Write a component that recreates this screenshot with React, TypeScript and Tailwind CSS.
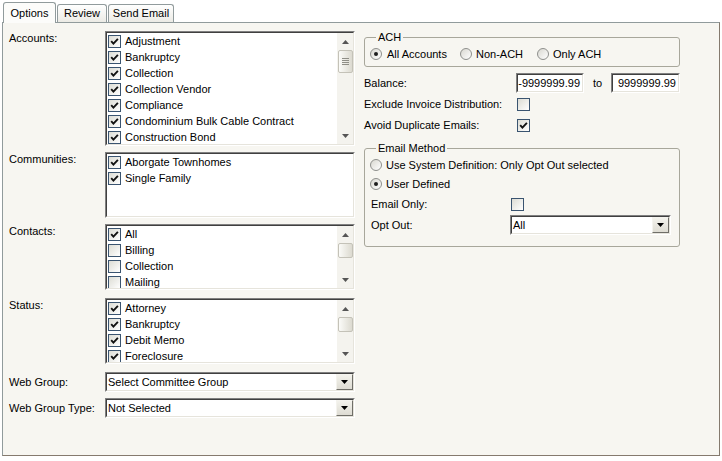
const accounts = [
  "Adjustment",
  "Bankruptcy",
  "Collection",
  "Collection Vendor",
  "Compliance",
  "Condominium Bulk Cable Contract",
  "Construction Bond",
];
const communities = ["Aborgate Townhomes", "Single Family"];
const contacts = [
  { label: "All", checked: true },
  { label: "Billing", checked: false },
  { label: "Collection", checked: false },
  { label: "Mailing", checked: false },
];
const statuses = ["Attorney", "Bankruptcy", "Debit Memo", "Foreclosure"];

function CheckBox({ checked }: { checked: boolean }) {
  return (
    <span className="w-[13px] h-[13px] shrink-0 border border-[#3a5470] bg-linear-to-br from-[#dcdcd4] to-white flex items-center justify-center">
      {checked && (
        <svg width="9" height="9" viewBox="0 0 9 9">
          <path d="M1.2 4.2 L3.4 6.6 L7.9 1.8" fill="none" stroke="#111" strokeWidth="1.9" />
        </svg>
      )}
    </span>
  );
}

function Radio({ checked }: { checked?: boolean }) {
  return (
    <span className="w-[12px] h-[12px] shrink-0 rounded-full border border-[#8e8f8c] bg-linear-to-br from-[#d9d8d1] to-white flex items-center justify-center">
      {checked && <span className="w-[4px] h-[4px] rounded-full bg-[#1e1e1e]" />}
    </span>
  );
}

// sunken 3d frame used by list boxes, text boxes and combos
function Sunken({ className, children }: { className: string; children: React.ReactNode }) {
  return (
    <div className={`border border-t-[#808080] border-l-[#808080] border-r-white border-b-white ${className}`}>
      <div className="h-full flex border border-t-[#404040] border-l-[#404040] border-r-[#e6e4dc] border-b-[#e6e4dc] bg-white">
        {children}
      </div>
    </div>
  );
}

function Tri({ up, color, w, h }: { up?: boolean; color: string; w: number; h: number }) {
  return (
    <svg width={w} height={h} viewBox={`0 0 ${w} ${h}`}>
      <path d={up ? `M0 ${h} L${w} ${h} L${w / 2} 0 Z` : `M0 0 L${w} 0 L${w / 2} ${h} Z`} fill={color} />
    </svg>
  );
}

function ScrollBar({ thumb, grip }: { thumb: string; grip?: boolean }) {
  return (
    <div className="w-[16px] shrink-0 bg-[#f4f3ee] flex flex-col items-center">
      <div className="h-[17px] w-full flex items-center justify-center shrink-0">
        <Tri up color="#555" w={7} h={4} />
      </div>
      <div className={`w-[15px] shrink-0 rounded-[2px] border border-[#c4c2b8] bg-linear-to-r from-[#fbfbf8] to-[#dcdad0] flex flex-col items-center justify-center gap-[1px] ${thumb}`}>
        {grip && (
          <>
            <span className="w-[7px] h-[1px] bg-[#8f8e86]" />
            <span className="w-[7px] h-[1px] bg-[#8f8e86]" />
            <span className="w-[7px] h-[1px] bg-[#8f8e86]" />
            <span className="w-[7px] h-[1px] bg-[#8f8e86]" />
          </>
        )}
      </div>
      <div className="flex-1" />
      <div className="h-[17px] w-full flex items-center justify-center shrink-0">
        <Tri color="#555" w={7} h={4} />
      </div>
    </div>
  );
}

function Item({ label, checked }: { label: string; checked: boolean }) {
  return (
    <div className="h-[16px] flex items-center gap-[4px] pl-[1px] whitespace-nowrap">
      <CheckBox checked={checked} />
      <span>{label}</span>
    </div>
  );
}

function Combo({ value, className }: { value: string; className: string }) {
  return (
    <Sunken className={className}>
      <div className="flex-1 flex items-center pl-[1px]">{value}</div>
      <div className="w-[17px] h-full shrink-0 border border-t-[#f4f3ee] border-l-[#f4f3ee] border-r-[#6f6e68] border-b-[#6f6e68] bg-linear-to-b from-[#f3f2ec] to-[#dedcd3] flex items-center justify-center">
        <Tri color="#000" w={7} h={4} />
      </div>
    </Sunken>
  );
}

function Tab({ label, active, w }: { label: string; active?: boolean; w: string }) {
  return active ? (
    <div className={`h-[21px] rounded-t-[3px] border border-b-0 border-[#919b9c] bg-[#fcfcfa] flex items-center justify-center relative z-10 ${w}`}>
      {label}
    </div>
  ) : (
    <div className={`h-[18px] mb-[1px] rounded-t-[3px] border border-b-0 border-[#919b9c] bg-linear-to-b from-white to-[#ecebe5] flex items-center justify-center ${w}`}>
      {label}
    </div>
  );
}

function Row({ label, children, top }: { label: string; children: React.ReactNode; top?: boolean }) {
  return (
    <div className={`flex ${top ? "items-start" : "items-center"}`}>
      <div className={`w-[96px] shrink-0 ${top ? "mt-[1px]" : ""}`}>{label}</div>
      {children}
    </div>
  );
}

export default function App() {
  return (
    <div className="w-[722px] h-[461px] bg-white pt-[2px] pl-[2px] text-[11px] leading-[13px] text-black font-['Liberation_Sans',Arial,sans-serif]">
      {/* tab strip */}
      <div className="h-[21px] -mb-[1px] pl-[1px] flex items-end gap-[1px]">
        <Tab label="Options" active w="w-[53px]" />
        <Tab label="Review" w="w-[50px]" />
        <Tab label="Send Email" w="w-[66px]" />
      </div>

      {/* tab page */}
      <div className="w-[718px] h-[434px] border border-[#919b9c] border-r-[#857a6e] border-b-[#857a6e] bg-[#f7f6f1] flex pt-[8px] pl-[6px]">
        {/* left column */}
        <div className="w-[346px] flex flex-col">
          <Row label="Accounts:" top>
            <Sunken className="w-[250px] h-[115px]">
              <div className="flex-1 overflow-hidden">
                {accounts.map((a) => (
                  <Item key={a} label={a} checked />
                ))}
              </div>
              <ScrollBar thumb="h-[23px]" grip />
            </Sunken>
          </Row>
          <div className="mt-[6px]">
            <Row label="Communities:" top>
              <Sunken className="w-[250px] h-[66px]">
                <div className="flex-1">
                  {communities.map((c) => (
                    <Item key={c} label={c} checked />
                  ))}
                </div>
              </Sunken>
            </Row>
          </div>
          <div className="mt-[6px]">
            <Row label="Contacts:" top>
              <Sunken className="w-[250px] h-[66px]">
                <div className="flex-1 overflow-hidden">
                  {contacts.map((c) => (
                    <Item key={c.label} label={c.label} checked={c.checked} />
                  ))}
                </div>
                <ScrollBar thumb="h-[15px]" />
              </Sunken>
            </Row>
          </div>
          <div className="mt-[8px]">
            <Row label="Status:" top>
              <Sunken className="w-[250px] h-[66px]">
                <div className="flex-1 overflow-hidden">
                  {statuses.map((s) => (
                    <Item key={s} label={s} checked />
                  ))}
                </div>
                <ScrollBar thumb="h-[15px]" />
              </Sunken>
            </Row>
          </div>
          <div className="mt-[8px]">
            <Row label="Web Group:">
              <Combo value="Select Committee Group" className="w-[250px] h-[20px]" />
            </Row>
          </div>
          <div className="mt-[6px]">
            <Row label="Web Group Type:">
              <Combo value="Not Selected" className="w-[250px] h-[20px]" />
            </Row>
          </div>
        </div>

        {/* right column */}
        <div className="ml-[9px] w-[317px] flex flex-col">
          <fieldset className="w-[316px] border border-[#a8a79b] rounded-[3px] px-[5px] pb-[4px]">
            <legend className="ml-[6px] px-[2px]">ACH</legend>
            <div className="mt-[2px] h-[16px] flex items-center">
              <div className="w-[90px] flex items-center gap-[5px]">
                <Radio checked />
                <span>All Accounts</span>
              </div>
              <div className="w-[77px] flex items-center gap-[4px]">
                <Radio />
                <span>Non-ACH</span>
              </div>
              <div className="flex items-center gap-[4px]">
                <Radio />
                <span>Only ACH</span>
              </div>
            </div>
          </fieldset>

          <div className="mt-[6px] h-[20px] flex items-center">
            <div className="w-[152px]">Balance:</div>
            <Sunken className="w-[68px] h-[20px]">
              <div className="flex-1 flex items-center justify-end pr-[2px]">-9999999.99</div>
            </Sunken>
            <div className="w-[27px] pl-[9px]">to</div>
            <Sunken className="w-[69px] h-[20px]">
              <div className="flex-1 flex items-center justify-end pr-[2px]">9999999.99</div>
            </Sunken>
          </div>

          <div className="mt-[3px] h-[16px] flex items-center">
            <div className="w-[153px]">Exclude Invoice Distribution:</div>
            <CheckBox checked={false} />
          </div>
          <div className="mt-[5px] h-[16px] flex items-center">
            <div className="w-[153px]">Avoid Duplicate Emails:</div>
            <CheckBox checked />
          </div>

          <fieldset className="mt-[9px] w-[316px] border border-[#a8a79b] rounded-[3px] px-[5px] pb-[11px]">
            <legend className="ml-[6px] px-[2px]">Email Method</legend>
            <div className="mt-[2px] h-[16px] flex items-center gap-[4px]">
              <Radio />
              <span>Use System Definition: Only Opt Out selected</span>
            </div>
            <div className="mt-[3px] h-[16px] flex items-center gap-[4px]">
              <Radio checked />
              <span>User Defined</span>
            </div>
            <div className="mt-[4px] h-[16px] flex items-center pl-[1px]">
              <div className="w-[140px]">Email Only:</div>
              <CheckBox checked={false} />
            </div>
            <div className="mt-[3px] flex items-center pl-[1px]">
              <div className="w-[139px]">Opt Out:</div>
              <Combo value="All" className="w-[161px] h-[20px]" />
            </div>
          </fieldset>
        </div>
      </div>
    </div>
  );
}
